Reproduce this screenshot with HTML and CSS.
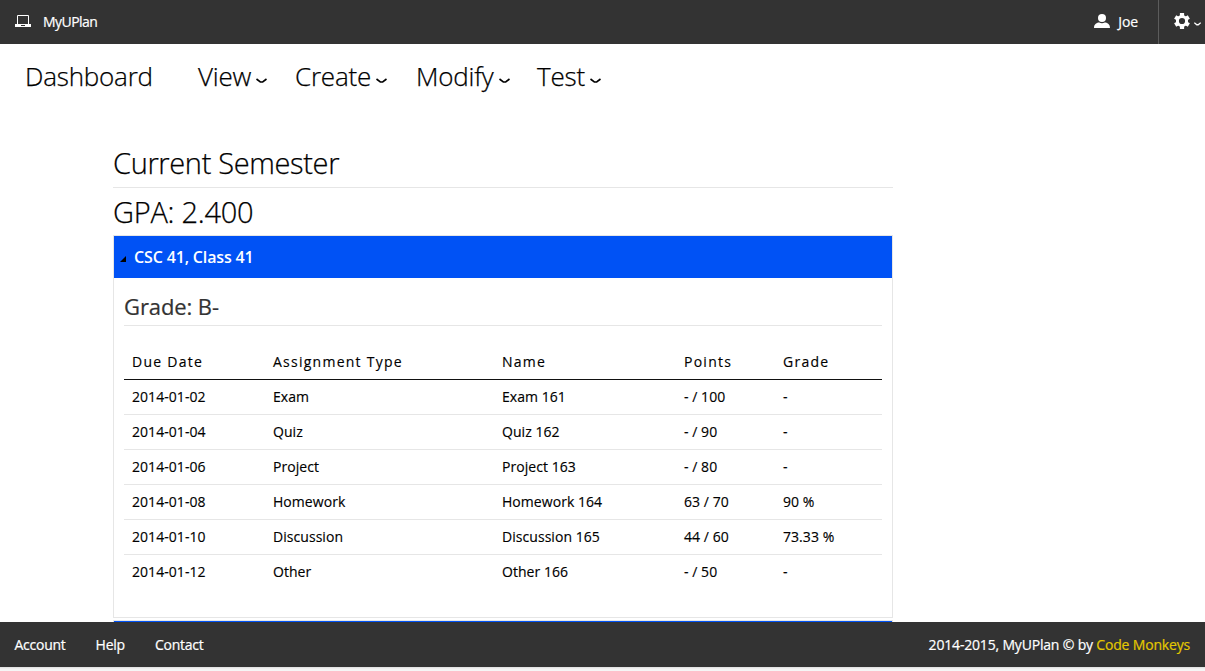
FILE: index.html
```html
<!DOCTYPE html>
<html lang="en">
<head>
<meta charset="utf-8">
<title>MyUPlan</title>
<link rel="stylesheet" href="styles.css">
</head>
<body>
<div class="page">
  <header class="topbar">
    <a class="brand">
      <svg class="laptop" width="16" height="12" viewBox="0 0 16 12"><path d="M2.500 9V.5h11V9" fill="none" stroke="#fff"/><path d="M0 9h16v3H0z" fill="#fff"/><path d="M6 10.500h4" stroke="#333"/></svg>
      <span>MyUPlan</span>
    </a>
    <div class="account">
      <a class="user">
        <svg width="16" height="14" viewBox="0 0 16 14" fill="#fff"><circle cx="8" cy="4" r="4"/><path d="M0 14c0-4 3-5.400 5.200-5.400Q8 10 10.800 8.600C13 8.600 16 10 16 14z"/></svg>
        <span>Joe</span>
      </a>
      <a class="settings">
        <svg width="16" height="16" viewBox="-8 -8 16 16" fill="none" stroke="#fff"><circle r="4.600" stroke-width="3"/><g stroke-width="4.200"><path d="M0-7.900v3M0 7.900v-3"/><path d="M0-7.900v3M0 7.900v-3" transform="rotate(60)"/><path d="M0-7.900v3M0 7.900v-3" transform="rotate(120)"/></g></svg>
        <svg class="caret-small" width="7" height="4" viewBox="0 0 7 4" fill="none" stroke="#fff" stroke-width="1.400"><path d="M.3.700 2.800 2.700h1.400L6.700.700"/></svg>
      </a>
    </div>
  </header>
  <nav class="menu">
    <a class="item dashboard">Dashboard</a>
    <a class="item view">View<svg class="caret" viewBox="0 0 11 6"><path d="M.5 1 4.300 4h2.400l3.800-3"/></svg></a>
    <a class="item create">Create<svg class="caret" viewBox="0 0 11 6"><path d="M.5 1 4.300 4h2.400l3.800-3"/></svg></a>
    <a class="item modify">Modify<svg class="caret" viewBox="0 0 11 6"><path d="M.5 1 4.300 4h2.400l3.800-3"/></svg></a>
    <a class="item test">Test<svg class="caret" viewBox="0 0 11 6"><path d="M.5 1 4.300 4h2.400l3.800-3"/></svg></a>
  </nav>
  <main class="content">
    <h1 class="semester"><span>Current Semester</span></h1>
    <h2 class="gpa"><span>GPA: 2.400</span></h2>
    <section class="panel">
      <div class="panel-head"><svg class="marker" width="6" height="6" viewBox="0 0 6 6"><path d="M6 0v6H0z"/></svg><span>CSC 41, Class 41</span></div>
      <div class="panel-body">
        <h3 class="grade"><span>Grade: B-</span></h3>
        <table class="assignments">
          <colgroup><col class="c-date"><col class="c-type"><col class="c-name"><col class="c-points"><col class="c-grade"></colgroup>
          <thead><tr><th>Due Date</th><th>Assignment Type</th><th>Name</th><th>Points</th><th>Grade</th></tr></thead>
          <tbody>
            <tr><td>2014-01-02</td><td>Exam</td><td>Exam 161</td><td>- / 100</td><td>-</td></tr>
            <tr><td>2014-01-04</td><td>Quiz</td><td>Quiz 162</td><td>- / 90</td><td>-</td></tr>
            <tr><td>2014-01-06</td><td>Project</td><td>Project 163</td><td>- / 80</td><td>-</td></tr>
            <tr><td>2014-01-08</td><td>Homework</td><td>Homework 164</td><td>63 / 70</td><td>90 %</td></tr>
            <tr><td>2014-01-10</td><td>Discussion</td><td>Discussion 165</td><td>44 / 60</td><td>73.33 %</td></tr>
            <tr><td>2014-01-12</td><td>Other</td><td>Other 166</td><td>- / 50</td><td>-</td></tr>
          </tbody>
        </table>
      </div>
    </section>
    <div class="next-panel"></div>
  </main>
  <footer class="footer">
    <div class="links"><a>Account</a><a>Help</a><a>Contact</a></div>
    <div class="copyright">2014-2015, MyUPlan © by <a class="author">Code Monkeys</a></div>
  </footer>
  <div class="edge"></div>
</div>
</body>
</html>
```
FILE: styles.css
```css
* { box-sizing: border-box; }
body { margin: 0; background: #fff; color: #000; font-family: "Open Sans", sans-serif; }
h1, h2, h3 { margin: 0; }
.page { display: flex; flex-direction: column; width: 1205px; height: 671px; overflow: hidden; }
.topbar { display: flex; flex: none; justify-content: space-between; height: 44px; background: #333; color: #fff; font-size: 14px; line-height: 44px; }
.brand { display: flex; align-items: center; gap: 12px; padding-left: 15px; letter-spacing: -0.55px; -webkit-text-stroke: 0.2px; }
.laptop { margin-top: -2px; }
.account, .user, .settings { display: flex; align-items: center; }
.user { gap: 8px; padding-right: 20px; letter-spacing: -0.1px; -webkit-text-stroke: 0.2px; }
.user svg { margin-top: -2px; }
.settings { width: 47px; height: 44px; gap: 4px; padding-left: 15px; border-left: 1px solid #5c5c5c; }
.settings svg { flex: none; margin-top: -2px; }
.settings .caret-small { margin-top: 4px; }
.menu { display: flex; flex: none; height: 66px; padding-bottom: 2px; font-size: 26px; font-weight: 300; line-height: 64px; letter-spacing: -0.2px; -webkit-text-stroke: 0.25px; }
.item { display: flex; align-items: center; white-space: nowrap; }
.dashboard { margin-left: 25px; width: 173px; }
.view { width: 97px; }
.create { width: 121px; }
.modify { width: 121px; }
.caret { width: 11px; height: 6px; margin: 10px 0 0 5px; fill: none; stroke: #000; stroke-width: 1.6; }
.content { flex: none; width: 780px; height: 512px; margin-left: 113px; padding-top: 31px; overflow: hidden; }
.semester { height: 47px; border-bottom: 1px solid #e6e6e6; font-size: 29px; font-weight: 300; line-height: 44px; letter-spacing: -0.35px; -webkit-text-stroke: 0.25px; }
.gpa { height: 47px; font-size: 29px; font-weight: 300; line-height: 48px; letter-spacing: -0.25px; -webkit-text-stroke: 0.25px; }
.panel { height: 383px; border: 1px solid #e6e6e6; }
.panel-head { display: flex; align-items: center; gap: 8px; height: 42px; padding-left: 6px; background: #0052f5; color: #fff; font-size: 16px; font-weight: 600; letter-spacing: -0.15px; }
.marker { margin-top: 4px; fill: #000; }
.panel-body { padding: 10px; }
.grade { height: 38px; border-bottom: 1px solid #e6e6e6; color: #333; font-size: 22px; font-weight: 400; line-height: 36px; letter-spacing: -0.1px; -webkit-text-stroke: 0.2px; }
.assignments { width: 758px; margin-top: 19px; border-collapse: separate; border-spacing: 0; table-layout: fixed; font-size: 14px; line-height: 20px; -webkit-text-stroke: 0.15px; }
.c-date { width: 141px; }
.c-type { width: 229px; }
.c-name { width: 182px; }
.c-points { width: 99px; }
.c-grade { width: 107px; }
.assignments th { height: 35px; padding: 0 8px; border-bottom: 1px solid #111; font-weight: 400; letter-spacing: 1.25px; text-align: left; }
.assignments td { height: 35px; padding: 0 8px; border-bottom: 1px solid #e6e6e6; letter-spacing: 0.05px; }
.assignments tr:last-child td { border-bottom-color: transparent; }
.assignments thead tr:last-child th { border-bottom-color: #111; }
.next-panel { height: 10px; margin-top: 2px; border: 1px solid #e6e6e6; background: #0052f5; }
.footer { display: flex; flex: none; justify-content: space-between; height: 45px; padding: 0 15px 0 14.5px; background: #333; color: #fff; font-size: 14px; line-height: 45px; letter-spacing: -0.25px; -webkit-text-stroke: 0.2px; }
.copyright { letter-spacing: -0.18px; }
.links { display: flex; gap: 30px; }
.author { color: #e3c800; }
.edge { flex: none; height: 4px; background: linear-gradient(#ddd, #f5f5f5 50%); }
```
